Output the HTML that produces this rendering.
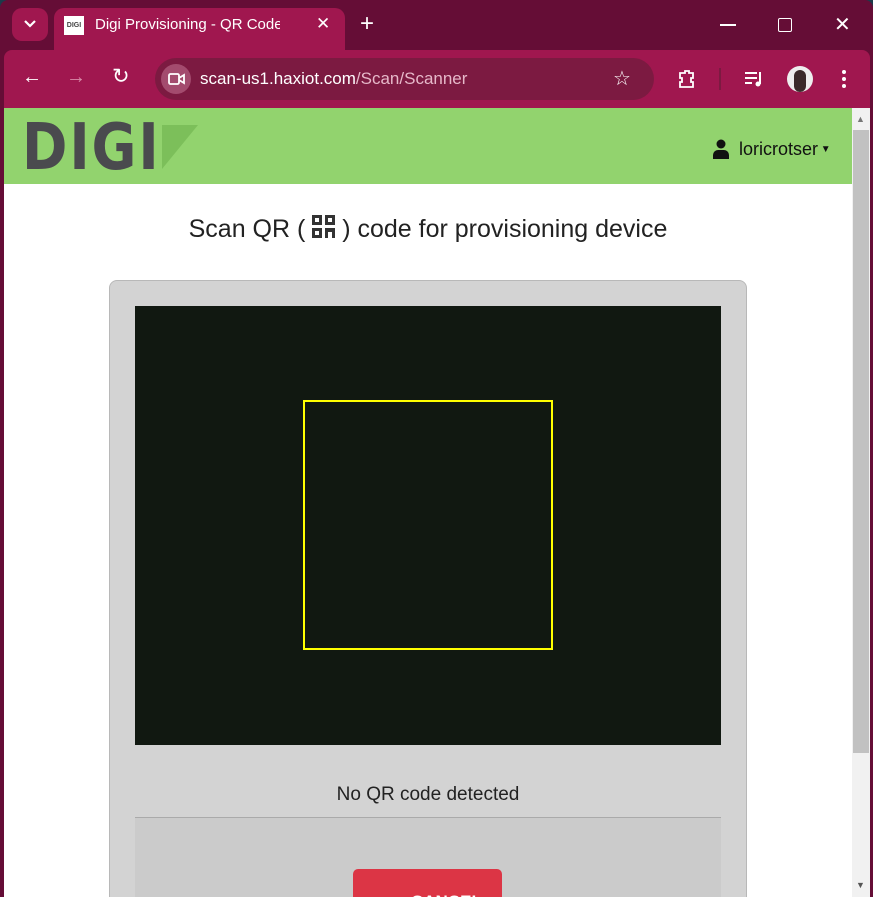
<!DOCTYPE html>
<html style="overflow:hidden;height:897px"><head><meta charset="utf-8"><style>
*{margin:0;padding:0;box-sizing:border-box}
body{width:873px;height:897px;overflow:hidden;background:#1c3a4a;font-family:"Liberation Sans",sans-serif;position:relative}
.abs{position:absolute}
</style></head><body>
<div class="abs" style="left:0;top:0;width:873px;height:897px;background:#650d36;border-radius:8px 8px 0 0"></div>
<div class="abs" style="left:12px;top:8px;width:36px;height:33px;background:#a0174f;border-radius:10px"></div>
<svg class="abs" style="left:22px;top:18px" width="16" height="12"><path d="M3 3l5 5 5-5" stroke="#fff" stroke-width="2.2" fill="none"/></svg>
<div class="abs" style="left:54px;top:8px;width:291px;height:44px;background:#a0174f;border-radius:10px 10px 0 0"></div>
<div class="abs" style="left:64px;top:16px;width:20px;height:19px;background:#fff;font-size:7px;font-weight:bold;color:#444;line-height:19px;text-align:center">DIGI</div>
<div class="abs" style="left:95px;top:16px;font-size:15px;color:#fff;white-space:nowrap;width:185px;overflow:hidden">Digi Provisioning - QR Code</div>
<div class="abs" style="left:316px;top:14px;font-size:17px;color:#fff">✕</div>
<div class="abs" style="left:360px;top:10px;font-size:24px;color:#fff">+</div>
<div class="abs" style="left:720px;top:24px;width:16px;height:1.5px;background:#fff"></div>
<div class="abs" style="left:778px;top:18px;width:14px;height:14px;border:1.5px solid #fff;border-radius:2px"></div>
<div class="abs" style="left:834px;top:12px;font-size:20px;color:#fff">✕</div>
<div class="abs" style="left:4px;top:50px;width:866px;height:58px;background:#a0174f;border-radius:8px 8px 0 0"></div>
<div class="abs" style="left:22px;top:66px;font-size:20px;color:#fff">←</div>
<div class="abs" style="left:66px;top:66px;font-size:20px;color:#d98aa8">→</div>
<div class="abs" style="left:112px;top:64px;font-size:21px;color:#fff">↻</div>
<div class="abs" style="left:155px;top:58px;width:499px;height:42px;background:#7c1a41;border-radius:21px"></div>
<div class="abs" style="left:161px;top:64px;width:30px;height:30px;background:#a34b6e;border-radius:15px"></div>
<svg class="abs" style="left:167px;top:71px" width="20" height="16"><rect x="2" y="3" width="10" height="10" rx="1.5" stroke="#fff" stroke-width="1.8" fill="none"/><path d="M12 7l5-3v8l-5-3" stroke="#fff" stroke-width="1.8" fill="none"/></svg>
<div class="abs" style="left:200px;top:69px;font-size:17px;color:#fff">scan-us1.haxiot.com<span style="color:#e6b8c9">/Scan/Scanner</span></div>
<div class="abs" style="left:613px;top:66px;font-size:20px;color:#fff">☆</div>
<svg class="abs" style="left:676px;top:68px" width="22" height="22"><path d="M4 5h5V3h4v2h4v5h-2v4h2v5H4v-5h2v-4H4z" stroke="#fff" stroke-width="1.8" fill="none"/></svg>
<div class="abs" style="left:719px;top:68px;width:2px;height:22px;background:#7c1a41"></div>
<svg class="abs" style="left:743px;top:68px" width="22" height="22"><path d="M2 5h12M2 10h12M2 15h7" stroke="#fff" stroke-width="2"/><path d="M17 4v12" stroke="#fff" stroke-width="2"/><circle cx="15" cy="16" r="2.5" fill="#fff"/></svg>
<div class="abs" style="left:787px;top:66px;width:26px;height:26px;border-radius:13px;background:#eee;overflow:hidden"><div style="margin:4px 7px;width:12px;height:22px;background:#3a2a2a;border-radius:6px"></div></div>
<div class="abs" style="left:842px;top:70px;width:4px;height:4px;border-radius:2px;background:#fff;box-shadow:0 7px #fff,0 14px #fff"></div>

<div class="abs" style="left:4px;top:108px;width:848px;height:789px;background:#fff"></div>
<div class="abs" style="left:852px;top:108px;width:18px;height:789px;background:#f1f1f1"></div>
<div class="abs" style="left:853px;top:130px;width:16px;height:623px;background:#c1c1c1"></div>
<div class="abs" style="left:856px;top:114px;font-size:9px;color:#777">▲</div>
<div class="abs" style="left:856px;top:880px;font-size:9px;color:#555">▼</div>
<div class="abs" style="left:4px;top:108px;width:848px;height:76px;background:#92d36e"></div>
<div class="abs" style="left:22px;top:112px;font-size:64px;font-weight:bold;color:#4a4a4e;letter-spacing:2px;line-height:72px;transform:scale(0.95,1.0);transform-origin:left top;font-family:'DejaVu Sans Condensed','Liberation Sans Narrow',sans-serif">DIGI</div>
<svg class="abs" style="left:162px;top:125px" width="38" height="45"><path d="M0 0h36L0 44z" fill="#7cbf5a"/></svg>
<svg class="abs" style="left:712px;top:139px" width="18" height="20"><circle cx="9" cy="5" r="4.5" fill="#111"/><path d="M1 20v-4a5 5 0 0 1 5-5h6a5 5 0 0 1 5 5v4z" fill="#111"/></svg>
<div class="abs" style="left:739px;top:139px;font-size:18px;color:#111">loricrotser<span style="font-size:10px;vertical-align:3px"> ▼</span></div>

<div class="abs" style="left:0;top:215px;width:856px;text-align:center;font-size:25px;color:#222">Scan QR ( <svg width="23" height="25" style="vertical-align:-3px"><g fill="#333"><rect x="0" y="0" width="10" height="10"/><rect x="13" y="0" width="10" height="10"/><rect x="0" y="13" width="10" height="10"/><rect x="13" y="13" width="10" height="10"/></g><g fill="#fff"><rect x="3" y="3" width="4" height="4"/><rect x="16" y="3" width="4" height="4"/><rect x="3" y="16" width="4" height="4"/><rect x="16" y="17" width="4" height="6"/></g></svg> ) code for provisioning device</div>

<div class="abs" style="left:109px;top:280px;width:638px;height:640px;background:#d3d3d3;border:1px solid #b8b8b8;border-radius:8px"></div>
<div class="abs" style="left:135px;top:306px;width:586px;height:439px;background:#111811"></div>
<div class="abs" style="left:303px;top:400px;width:250px;height:250px;border:2px solid #ffff00"></div>
<div class="abs" style="left:135px;top:784px;width:586px;text-align:center;font-size:19px;color:#222">No QR code detected</div>
<div class="abs" style="left:135px;top:817px;width:586px;height:80px;background:#cbcbcb;border-top:1px solid #aaa"></div>
<div class="abs" style="left:353px;top:869px;width:149px;height:28px;background:#dc3545;border-radius:5px 5px 0 0;overflow:hidden"><div style="position:absolute;left:58px;top:23px;font-size:17px;font-weight:bold;color:#fff">CANCEL</div></div>
</body></html>
